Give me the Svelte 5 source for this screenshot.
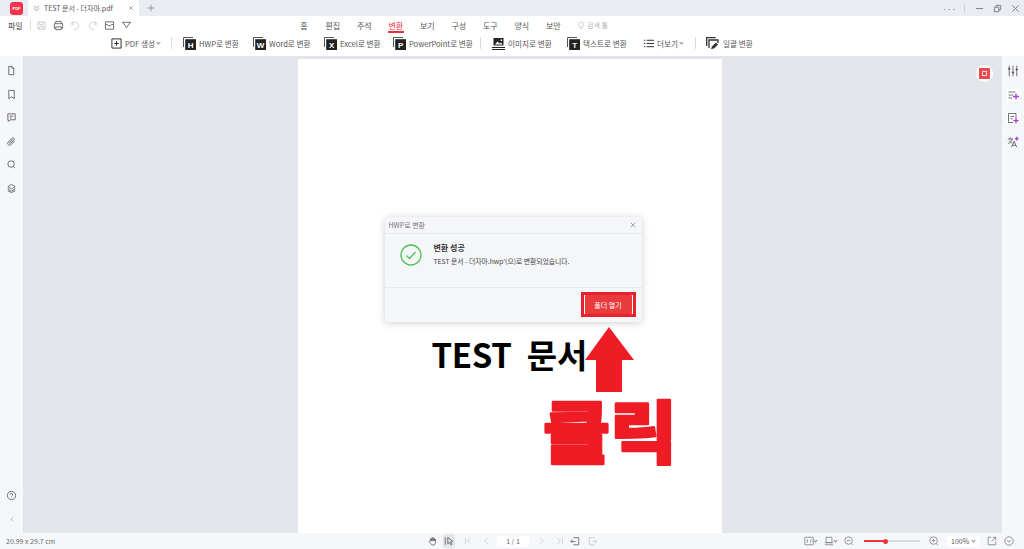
<script>
  const menus = ["홈", "편집", "주석", "변환", "보기", "구성", "도구", "양식", "보안"];
  const convert = [
    { letter: "H", label: "HWP로 변환", w: 70 },
    { letter: "W", label: "Word로 변환", w: 71 },
    { letter: "X", label: "Excel로 변환", w: 69 },
    { letter: "P", label: "PowerPoint로 변환", w: 87 }
  ];
  const sideIcons = [
    "M6 3h7l4 4v14H6zM13 3v4h4",
    "M6 3h12v18l-6-4-6 4z",
    "M4 4h16v13H9l-4 4v-4H4zM8 9h8M8 13h4",
    "M19 11l-8 8a4 4 0 0 1-6-6l9-9a3 3 0 0 1 4 4l-8 8a1.5 1.5 0 0 1-2-2l7-7",
    "M11 4a7 7 0 1 0 0 14a7 7 0 0 0 0-14zM16 16l4 4",
    "M12 3l8 5-8 5-8-5zM5 12l-1 1 8 5 8-5-1-1M5 16l-1 1 8 4 8-4-1-1"
  ];
</script>

<div class="app">
  <header class="tabbar">
    <div class="logo">PDF</div>
    <div class="tab">
      <svg class="tab-ico" viewBox="0 0 8 8"><path d="M1 1l3 2.5L7 1M1 4l3 2.5L7 4" /></svg>
      <span class="tab-title">TEST 문서 - 더자마.pdf</span>
      <svg class="tab-x" viewBox="0 0 8 8"><path d="M1.5 1.5l5 5M6.5 1.5l-5 5" /></svg>
    </div>
    <svg class="plus" viewBox="0 0 10 10"><path d="M5 1v8M1 5h8" /></svg>
    <div class="win">
      <span class="dots">···</span>
      <i class="win-sep"></i>
      <svg viewBox="0 0 10 10"><path d="M1 5h8" /></svg>
      <svg viewBox="0 0 10 10"><path d="M1.5 3.5h5v5h-5zM3.5 3.5v-2h5v5h-2" /></svg>
      <svg viewBox="0 0 10 10"><path d="M1.5 1.5l7 7M8.5 1.5l-7 7" /></svg>
    </div>
  </header>

  <section class="ribbon">
    <div class="row-top">
      <div class="quick">
        <span class="file">파일</span>
        <i class="vsep short"></i>
        <svg class="q faint" viewBox="0 0 12 12"><path d="M2 2h7l1 1v7H2zM4 2v3h4V2M4 10V7h4v3" /></svg>
        <svg class="q" viewBox="0 0 12 12"><path d="M3 4V1.5h6V4M1.5 4h9v5H9M3 9H1.5V4M3 7.5h6v3H3z" /></svg>
        <svg class="q faint" viewBox="0 0 12 12"><path d="M3 2L1.5 4.5 4 5.5M2 4.5a4 4 0 1 1 2 5.5" /></svg>
        <svg class="q faint" viewBox="0 0 12 12"><path d="M9 2l1.5 2.5L8 5.5M10 4.5a4 4 0 1 0-2 5.5" /></svg>
        <svg class="q" viewBox="0 0 12 12"><path d="M1.5 2h9v8h-9zM1.5 5H4l1 1.5h2L8 5h2.5" /></svg>
        <svg class="q" viewBox="0 0 12 12"><path d="M1 2.5h10M2 2.5l4 6 4-6" /></svg>
      </div>
      <nav class="menus">
        {#each menus as m}
          <span class="menu" class:active={m === "변환"}>{m}</span>
        {/each}
        <span class="search">
          <svg viewBox="0 0 10 10"><path d="M3 6.5a3 3 0 1 1 4 0V8H3zM4 9.5h2" /></svg>
          검색 툴
        </span>
      </nav>
    </div>

    <div class="row-tools">
      <div class="tool" style="width:50px">
        <svg class="ti" viewBox="0 0 12 12"><path d="M1 1h10v10H1zM6 3.5v5M3.5 6h5" /></svg>
        <span>PDF 생성</span><b class="chev"></b>
      </div>
      <i class="vsep tall"></i>
      {#each convert as c}
        <div class="tool" style={`width:${c.w}px`}>
          <svg class="li" viewBox="0 0 13 13">
            <path class="back" d="M.5 10V.5H10" />
            <rect x="2.2" y="2.2" width="10.8" height="10.8" />
            <text x="7.6" y="11">{c.letter}</text>
          </svg>
          <span>{c.label}</span>
        </div>
      {/each}
      <i class="vsep tall second"></i>
      <div class="tool" style="width:75px">
        <svg class="li" viewBox="0 0 13 13">
          <path fill="#222" d="M1.5 1h10v7.5h-10zM0 10h13v1H0zM0 12h13v1H0z" />
          <path fill="#fff" d="M3 7.5l2.5-3 2 2 1.5-1 1.5 2zM8.5 2.5h1.6v1.6H8.5z" />
        </svg>
        <span>이미지로 변환</span>
      </div>
      <div class="tool" style="width:76px">
        <svg class="li" viewBox="0 0 13 13">
          <path class="back" d="M.5 10V.5H10" />
          <rect x="2.2" y="2.2" width="10.8" height="10.8" />
          <text x="7.6" y="11">T</text>
        </svg>
        <span>텍스트로 변환</span>
      </div>
      <div class="tool" style="width:52px">
        <svg class="ti" viewBox="0 0 12 12"><path d="M1 2.5h1.5M4 2.5h8M1 6h1.5M4 6h8M1 9.5h1.5M4 9.5h8" /></svg>
        <span>더보기</span><b class="chev"></b>
      </div>
      <i class="vsep tall third"></i>
      <div class="tool">
        <svg class="li wide" viewBox="0 0 14 13">
          <path d="M.7 9V.7h9" fill="none" stroke="#333" stroke-width="1.3" />
          <path d="M3 11V3h9v3" fill="none" stroke="#333" stroke-width="1.3" />
          <path d="M5 12l1-2.500 4-4 2 2-4 4z" fill="#333" />
        </svg>
        <span>일괄 변환</span>
      </div>
    </div>
  </section>

  <main class="body">
    <aside class="left">
      <div class="side-top">
        {#each sideIcons as d}
          <svg class="si" viewBox="0 0 24 24"><path d={d} /></svg>
        {/each}
      </div>
      <div class="side-bottom">
        <svg class="si" viewBox="0 0 24 24"><circle cx="12" cy="12" r="9" /><path d="M9.500 10a2.500 2.500 0 1 1 3.500 2.300c-.7.400-1 .9-1 1.700M12 16.500v1" /></svg>
        <svg class="collapse" viewBox="0 0 8 8"><path d="M5.500 1L2.500 4l3 3" /></svg>
      </div>
    </aside>

    <div class="canvas">
      <div class="page">
        <p class="doc-title">TEST 문서</p>

        <div class="dialog">
          <div class="dlg-head">
            <span>HWP로 변환</span>
            <svg viewBox="0 0 8 8"><path d="M1 1l6 6M7 1l-6 6" /></svg>
          </div>
          <div class="dlg-body">
            <svg class="check" viewBox="0 0 22 22">
              <circle cx="11" cy="11" r="10" />
              <path d="M6.500 11.500l3 3 6-6.500" />
            </svg>
            <div>
              <h2>변환 성공</h2>
              <p>TEST 문서 - 더자마.hwp'(으)로 변환되었습니다.</p>
            </div>
          </div>
          <div class="dlg-foot">
            <span class="mark"><button class="open">폴더 열기</button></span>
          </div>
        </div>

        <svg class="arrow" viewBox="0 0 50 65"><path d="M24 0L49 33H37V65H11V33H0z" /></svg>
        <svg class="click" viewBox="0 0 140 70">
          <text x="2" y="60" textLength="134" lengthAdjust="spacingAndGlyphs">클릭</text>
        </svg>
      </div>
      <div class="float-btn"><i></i></div>
    </div>

    <aside class="right">
      <svg class="ri" viewBox="0 0 16 16"><path d="M3 1v14M8 1v14M13 1v14" /><path class="knob" d="M1.500 5h3M6.500 10h3M11.500 6h3" /></svg>
      <div class="ai">
        <svg class="ri" viewBox="0 0 16 16"><path d="M2 4h9M2 8h6M2 12h5" /><path class="spark" d="M12 6v8M8 10h8" /></svg>
      </div>
      <div class="ai">
        <svg class="ri" viewBox="0 0 16 16"><path d="M2 2h10v6M2 2v12h6M4.500 6h5M4.500 9h3" /><path class="spark" d="M12 8v7M8.500 11.500h7" /></svg>
      </div>
      <svg class="ri" viewBox="0 0 16 16"><path d="M1 4h7M4.500 2v2M7 4c-.5 3-3 5-5.500 6M3 6c1 2 3 3 4 3.500M6 15l3.500-8 3.500 8M7.300 12.500h4.500" /><path class="spark" d="M13 1v5M10.500 3.500h5" /></svg>
    </aside>
  </main>

  <footer class="status">
    <span class="size">20.99 x 29.7 cm</span>
    <div class="pager">
      <svg class="st dark hand" viewBox="0 0 12 12"><path d="M3 6V3.500a.8.8 0 0 1 1.500 0V6V2.500a.8.8 0 0 1 1.500 0V6V2.800a.8.8 0 0 1 1.500 0V6V4a.8.8 0 0 1 1.500 0v4a3 3 0 0 1-3 3H6a3 3 0 0 1-2.500-1.500L1.500 7a.9.9 0 0 1 1.500-1z" /></svg>
      <span class="sel"><svg class="st dark" viewBox="0 0 12 12"><path d="M1.500 1.500v9M4.500 1.500l6 5-2.500.5 1.500 3-1.500.5-1.300-3-2.200 2z" /></svg></span>
      <svg class="st faint" viewBox="0 0 12 12"><path d="M3 2.500v7M9 2.500L5.500 6 9 9.500" /></svg>
      <svg class="st faint" viewBox="0 0 12 12"><path d="M8 2.500L4.500 6 8 9.500" /></svg>
      <span class="pageno">1 / 1</span>
      <svg class="st faint" viewBox="0 0 12 12"><path d="M4 2.500L7.500 6 4 9.500" /></svg>
      <svg class="st faint" viewBox="0 0 12 12"><path d="M3 2.500L6.500 6 3 9.500M9 2.500v7" /></svg>
      <svg class="st dark back-page" viewBox="0 0 12 12"><path d="M4 2h6.500v8.500H4M1 6.500h5.500M3 4.500l-2 2 2 2" /></svg>
      <svg class="st faint" viewBox="0 0 12 12"><path d="M8 2H1.500v8.500H8M5 6.500h5.500M8.500 4.500l2 2-2 2" /></svg>
    </div>
    <div class="view">
      <svg class="st" viewBox="0 0 12 12"><path d="M1 1.500h10v9H1zM4 4v4M8 4v4" /></svg><b class="chev"></b>
      <svg class="st gap" viewBox="0 0 12 12"><path d="M2.500 1.500h7v6.500h-7zM1 8h10M1 10.500h10" /></svg><b class="chev"></b>
      <svg class="st gap" viewBox="0 0 12 12"><circle cx="5.500" cy="5.500" r="4.500" /><path d="M3.500 5.500h4M9 9l2 2" /></svg>
      <div class="slider"><i class="fill"></i><i class="dot"></i></div>
      <svg class="st" viewBox="0 0 12 12"><circle cx="5.500" cy="5.500" r="4.500" /><path d="M3.500 5.500h4M5.500 3.500v4M9 9l2 2" /></svg>
      <span class="zoom">100%<b class="chev"></b></span>
      <svg class="st share" viewBox="0 0 12 12"><path d="M5 1.500H1.500v9h9V7M7 1.500h3.500V5M10.500 1.500L5.500 6.500" /></svg>
      <svg class="st last" viewBox="0 0 12 12"><circle cx="6" cy="6" r="5" /><path d="M3.800 5l2.200 2.200L8.200 5" /></svg>
    </div>
  </footer>
</div>

<style>
  :global(body) {
    margin: 0;
    background: #fff;
  }

  svg {
    display: block;
    flex: none;
    fill: none;
    stroke: #666;
  }

  i {
    display: block;
  }

  .app {
    width: 1024px;
    height: 549px;
    display: flex;
    flex-direction: column;
    overflow: hidden;
    font-family: "Noto Sans CJK KR", "Noto Sans", sans-serif;
    font-size: 8px;
    color: #555;
  }

  .tabbar {
    height: 16px;
    flex: none;
    display: flex;
    align-items: center;
    background: #e9ecf3;
  }

  .logo {
    width: 13px;
    height: 13px;
    margin-left: 10px;
    border-radius: 3px;
    background: #f7324c;
    color: #fff;
    font: 700 4px/13px "Liberation Sans", sans-serif;
    text-align: center;
  }

  .tab {
    width: 111px;
    height: 16px;
    margin-left: 5px;
    display: flex;
    align-items: center;
    background: #fff;
    border-radius: 3px 3px 0 0;
  }

  .tab-ico {
    width: 7px;
    height: 7px;
    margin-left: 5px;
    stroke: #999;
  }

  .tab-title {
    margin-left: 4px;
    font-size: 7px;
    white-space: nowrap;
    width: 76px;
  }

  .tab-x {
    width: 6px;
    height: 6px;
    margin-left: 8px;
    stroke: #888;
  }

  .plus {
    width: 8px;
    height: 8px;
    margin-left: 8px;
    stroke: #888;
  }

  .win {
    margin-left: auto;
    display: flex;
    align-items: center;
    padding-right: 4px;
  }

  .win svg {
    width: 9px;
    height: 9px;
    margin-left: 9px;
    stroke: #777;
  }

  .dots {
    color: #777;
    font-size: 8px;
  }

  .win-sep {
    width: 1px;
    height: 9px;
    margin-left: 8px;
    margin-right: 1px;
    background: #ccd0d8;
  }

  .ribbon {
    height: 40px;
    flex: none;
    background: #fff;
    display: flex;
    flex-direction: column;
  }

  .row-top {
    height: 18px;
    display: flex;
    align-items: center;
  }

  .quick {
    width: 291px;
    flex: none;
    display: flex;
    align-items: center;
    padding-left: 8px;
    box-sizing: border-box;
  }

  .file {
    color: #444;
  }

  .vsep {
    width: 1px;
    background: #d9dbe0;
    flex: none;
  }

  .vsep.short {
    height: 10px;
    margin: 0 5px 0 7px;
  }

  .q {
    width: 11px;
    height: 11px;
    margin-right: 6px;
  }

  .q.faint {
    stroke: #c8cad0;
  }

  .menus {
    display: flex;
    align-items: center;
  }

  .menu {
    width: 31.500px;
    flex: none;
    text-align: center;
    position: relative;
    color: #555;
  }

  .menu:first-child {
    width: 26px;
  }

  .menu.active {
    color: #ef2f3c;
  }

  .menu.active::after {
    content: "";
    position: absolute;
    left: 8px;
    right: 8px;
    bottom: -2px;
    height: 1.500px;
    background: #ef2f3c;
  }

  .search {
    display: flex;
    align-items: center;
    gap: 2px;
    margin-left: 8px;
    color: #b5b7bd;
    font-size: 7px;
  }

  .search svg {
    width: 8px;
    height: 8px;
    stroke: #c4c6cc;
  }

  .row-tools {
    height: 18px;
    display: flex;
    align-items: center;
    padding-left: 111px;
  }

  .tool {
    display: flex;
    align-items: center;
    flex: none;
    white-space: nowrap;
    gap: 3px;
    font-size: 7.600px;
  }

  .ti {
    width: 11px;
    height: 11px;
    stroke: #222;
  }

  .li {
    width: 13px;
    height: 13px;
    stroke: none;
  }

  .li.wide {
    width: 14px;
  }

  .li .back {
    fill: none;
    stroke: #555;
  }

  .li rect {
    fill: #222;
  }

  .li text {
    fill: #fff;
    font: 700 8px "Liberation Sans", sans-serif;
    text-anchor: middle;
  }

  .chev {
    display: inline-block;
    width: 2px;
    height: 2px;
    margin: -1px 0 0 0;
    border-right: 0.600px solid #888;
    border-bottom: 0.600px solid #888;
    transform: rotate(45deg);
    flex: none;
  }

  .tool .chev {
    margin-left: -1px;
  }

  .vsep.tall {
    height: 12px;
    margin-right: 11px;
    margin-left: 10px;
  }

  .vsep.tall.second {
    margin-left: 0;
  }

  .vsep.tall.third {
    margin-left: 0;
    margin-right: 10px;
  }

  .body {
    height: 477px;
    flex: none;
    display: flex;
  }

  .left {
    width: 23px;
    flex: none;
    background: #f6f7fb;
    display: flex;
    flex-direction: column;
    justify-content: space-between;
    align-items: center;
  }

  .side-top {
    display: flex;
    flex-direction: column;
    gap: 12.500px;
    padding-top: 9px;
  }

  .si {
    width: 11px;
    height: 11px;
    stroke: #666;
    stroke-width: 2;
  }

  .side-bottom {
    display: flex;
    flex-direction: column;
    align-items: center;
    gap: 15.500px;
    padding-bottom: 11px;
  }

  .collapse {
    width: 6px;
    height: 6px;
    stroke: #aaa;
  }

  .canvas {
    flex: 1;
    position: relative;
    background: #e3e5ea;
    padding-top: 3px;
    display: flex;
    justify-content: center;
    box-sizing: border-box;
    min-width: 0;
  }

  .page {
    width: 424px;
    height: 474px;
    margin-left: -6px;
    background: #fff;
    position: relative;
  }

  .doc-title {
    position: absolute;
    left: 134px;
    top: 272px;
    margin: 0;
    color: #000;
    font-size: 33px;
    line-height: 46px;
    font-weight: 700;
    word-spacing: 8px;
    letter-spacing: -0.3px;
    white-space: nowrap;
  }

  .dialog {
    position: absolute;
    left: 87px;
    top: 158px;
    width: 257px;
    height: 105px;
    background: #f5f6fa;
    border-radius: 3px;
    box-shadow: 0 1px 7px rgba(60, 65, 80, 0.25);
    display: flex;
    flex-direction: column;
  }

  .dlg-head {
    height: 16px;
    flex: none;
    display: flex;
    align-items: center;
    justify-content: space-between;
    padding: 0 6px 0 4px;
    border-bottom: 1px solid #e6e8ee;
    font-size: 7px;
    color: #777;
  }

  .dlg-head svg {
    width: 6px;
    height: 6px;
    stroke: #888;
  }

  .dlg-body {
    height: 54px;
    flex: none;
    display: flex;
    padding: 8px 0 0 15px;
    box-sizing: border-box;
    border-bottom: 1px solid #e6e8ee;
  }

  .check {
    width: 22px;
    height: 22px;
    margin-right: 12px;
    margin-top: 2px;
    stroke: #4cc253;
    stroke-width: 1.300;
  }

  .dlg-body h2 {
    margin: 0;
    font-size: 8px;
    line-height: 11px;
    font-weight: 700;
    color: #333;
  }

  .dlg-body p {
    margin: 3px 0 0;
    font-size: 6.800px;
    line-height: 10px;
    color: #444;
  }

  .dlg-foot {
    flex: 1;
    display: flex;
    justify-content: flex-end;
    align-items: flex-start;
    padding: 4px 6px 0 0;
  }

  .mark {
    display: flex;
    padding: 0 1px;
    border: 3px solid #e8212e;
    background: #fff;
  }

  .open {
    width: 47px;
    height: 19px;
    padding: 0;
    border: 0;
    border-radius: 1px;
    background: #e93a3c;
    color: #fff;
    font: 7px "Noto Sans CJK KR", sans-serif;
  }

  .arrow {
    position: absolute;
    left: 287px;
    top: 268px;
    width: 50px;
    height: 65px;
    fill: #ee1c25;
    stroke: none;
  }

  .click {
    position: absolute;
    left: 243px;
    top: 339px;
    width: 140px;
    height: 70px;
    overflow: visible;
    fill: #ee1c25;
    stroke: #ee1c25;
    stroke-width: 2.500;
    stroke-linejoin: round;
  }

  .click text {
    font-size: 68px;
    font-weight: 900;
    font-family: "Noto Sans CJK KR", sans-serif;
  }

  .float-btn {
    position: absolute;
    top: 9px;
    left: 953px;
    width: 17px;
    height: 17px;
    border-radius: 50%;
    background: #fff;
    display: flex;
    align-items: center;
    justify-content: center;
  }

  .float-btn i {
    width: 9px;
    height: 9px;
    background: #ea4b50;
    border: 2.500px solid #ea4b50;
    box-sizing: border-box;
    outline: 1px solid #ea4b50;
    box-shadow: inset 0 0 0 1px #ffd6d6;
  }

  .right {
    width: 22px;
    flex: none;
    background: #f6f7fb;
    display: flex;
    flex-direction: column;
    align-items: center;
    padding-top: 9px;
    gap: 11.500px;
    box-sizing: border-box;
  }

  .ri {
    width: 12px;
    height: 12px;
    stroke: #555;
    stroke-width: 1.100;
  }

  .ri .spark {
    stroke: #a43be0;
    stroke-width: 1.800;
  }

  .ri .knob {
    stroke-width: 1.800;
  }

  .ai {
    background: #fff;
    padding: 0;
  }

  .status {
    height: 16px;
    flex: none;
    display: flex;
    align-items: center;
    background: #f6f7fb;
    position: relative;
  }

  .size {
    width: 428px;
    flex: none;
    padding-left: 6px;
    box-sizing: border-box;
    font-size: 7px;
    color: #666;
  }

  .pager {
    width: 368px;
    flex: none;
    display: flex;
    align-items: center;
  }

  .st {
    width: 10px;
    height: 10px;
    stroke: #777;
    stroke-width: 0.900;
  }

  .st.dark {
    stroke: #555;
  }

  .st.faint {
    stroke: #c4c6cc;
    margin-left: 8px;
  }

  .hand {
    margin-right: 1px;
  }

  .sel {
    padding: 2px 1px;
    margin-left: 4px;
    background: #e3e5ea;
    border-radius: 2px;
  }

  .pageno {
    width: 32px;
    height: 11px;
    margin-left: 6px;
    background: #fff;
    text-align: center;
    font-size: 7px;
    line-height: 11px;
    color: #666;
  }

  .back-page {
    margin-left: 5px;
  }

  .view {
    display: flex;
    align-items: center;
    margin-left: 8px;
  }

  .st.gap {
    margin-left: 7px;
  }

  .slider {
    width: 56px;
    height: 2px;
    margin: 0 9px 0 10px;
    position: relative;
    background: #d9dbe0;
  }

  .fill {
    width: 22px;
    height: 2px;
    background: #e8373c;
  }

  .dot {
    position: absolute;
    left: 19px;
    top: -1.500px;
    width: 5px;
    height: 5px;
    border-radius: 50%;
    background: #e8373c;
  }

  .zoom {
    width: 33px;
    height: 11px;
    margin-left: 8px;
    background: #fff;
    display: flex;
    align-items: center;
    justify-content: space-between;
    padding: 0 5px 0 4px;
    box-sizing: border-box;
    font-size: 7px;
    color: #555;
  }

  .share {
    margin-left: 7px;
  }

  .last {
    margin-left: 7px;
  }
</style>
